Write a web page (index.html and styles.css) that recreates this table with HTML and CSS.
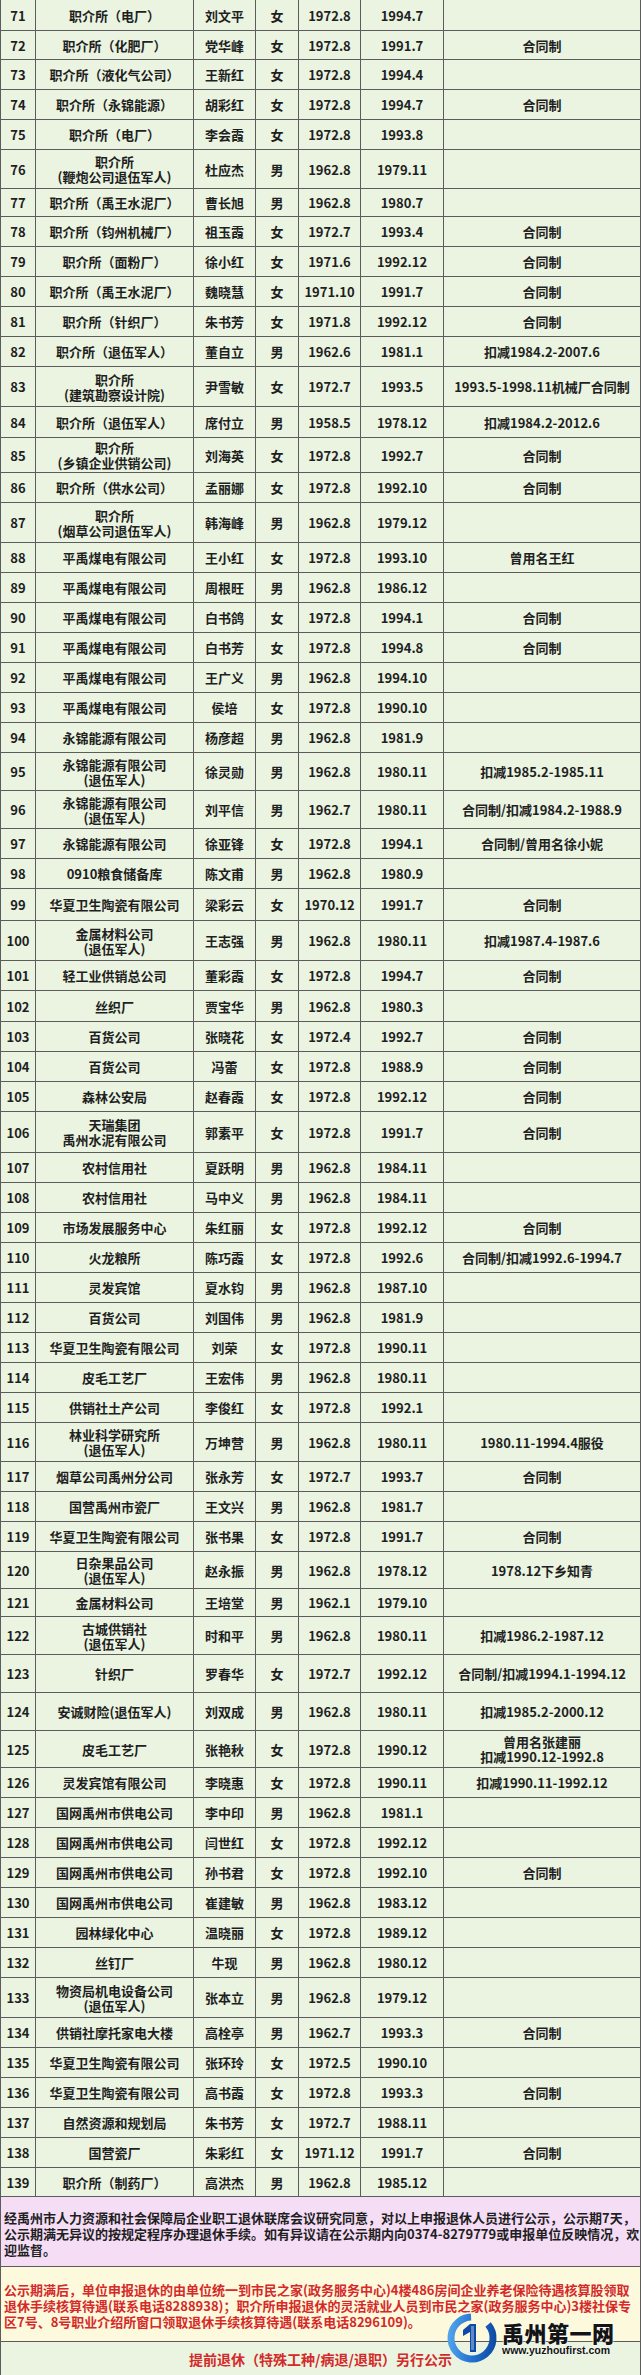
FILE: index.html
```html
<!DOCTYPE html>
<html lang="zh-CN">
<head>
<meta charset="utf-8">
<title>退休人员公示</title>
<link rel="stylesheet" href="styles.css">
</head>
<body>
<div class="page">
  <div class="table">
    <div class="row h31"><div>71</div><div>职介所（电厂）</div><div>刘文平</div><div>女</div><div>1972.8</div><div>1994.7</div><div></div></div>
    <div class="row h29"><div>72</div><div>职介所（化肥厂）</div><div>党华峰</div><div>女</div><div>1972.8</div><div>1991.7</div><div>合同制</div></div>
    <div class="row"><div>73</div><div>职介所（液化气公司）</div><div>王新红</div><div>女</div><div>1972.8</div><div>1994.4</div><div></div></div>
    <div class="row"><div>74</div><div>职介所（永锦能源）</div><div>胡彩红</div><div>女</div><div>1972.8</div><div>1994.7</div><div>合同制</div></div>
    <div class="row"><div>75</div><div>职介所（电厂）</div><div>李会霞</div><div>女</div><div>1972.8</div><div>1993.8</div><div></div></div>
    <div class="row h39"><div>76</div><div>职介所<br>(鞭炮公司退伍军人)</div><div>杜应杰</div><div>男</div><div>1962.8</div><div>1979.11</div><div></div></div>
    <div class="row h28"><div>77</div><div>职介所（禹王水泥厂）</div><div>曹长旭</div><div>男</div><div>1962.8</div><div>1980.7</div><div></div></div>
    <div class="row"><div>78</div><div>职介所（钧州机械厂）</div><div>祖玉霞</div><div>女</div><div>1972.7</div><div>1993.4</div><div>合同制</div></div>
    <div class="row"><div>79</div><div>职介所（面粉厂）</div><div>徐小红</div><div>女</div><div>1971.6</div><div>1992.12</div><div>合同制</div></div>
    <div class="row"><div>80</div><div>职介所（禹王水泥厂）</div><div>魏晓慧</div><div>女</div><div>1971.10</div><div>1991.7</div><div>合同制</div></div>
    <div class="row"><div>81</div><div>职介所（针织厂）</div><div>朱书芳</div><div>女</div><div>1971.8</div><div>1992.12</div><div>合同制</div></div>
    <div class="row"><div>82</div><div>职介所（退伍军人）</div><div>董自立</div><div>男</div><div>1962.6</div><div>1981.1</div><div>扣减1984.2-2007.6</div></div>
    <div class="row h40"><div>83</div><div>职介所<br>(建筑勘察设计院)</div><div>尹雪敏</div><div>女</div><div>1972.7</div><div>1993.5</div><div>1993.5-1998.11机械厂合同制</div></div>
    <div class="row h31"><div>84</div><div>职介所（退伍军人）</div><div>席付立</div><div>男</div><div>1958.5</div><div>1978.12</div><div>扣减1984.2-2012.6</div></div>
    <div class="row h35"><div>85</div><div>职介所<br>(乡镇企业供销公司)</div><div>刘海英</div><div>女</div><div>1972.8</div><div>1992.7</div><div>合同制</div></div>
    <div class="row"><div>86</div><div>职介所（供水公司）</div><div>孟丽娜</div><div>女</div><div>1972.8</div><div>1992.10</div><div>合同制</div></div>
    <div class="row h40"><div>87</div><div>职介所<br>(烟草公司退伍军人)</div><div>韩海峰</div><div>男</div><div>1962.8</div><div>1979.12</div><div></div></div>
    <div class="row"><div>88</div><div>平禹煤电有限公司</div><div>王小红</div><div>女</div><div>1972.8</div><div>1993.10</div><div>曾用名王红</div></div>
    <div class="row"><div>89</div><div>平禹煤电有限公司</div><div>周根旺</div><div>男</div><div>1962.8</div><div>1986.12</div><div></div></div>
    <div class="row"><div>90</div><div>平禹煤电有限公司</div><div>白书鸽</div><div>女</div><div>1972.8</div><div>1994.1</div><div>合同制</div></div>
    <div class="row"><div>91</div><div>平禹煤电有限公司</div><div>白书芳</div><div>女</div><div>1972.8</div><div>1994.8</div><div>合同制</div></div>
    <div class="row"><div>92</div><div>平禹煤电有限公司</div><div>王广义</div><div>男</div><div>1962.8</div><div>1994.10</div><div></div></div>
    <div class="row"><div>93</div><div>平禹煤电有限公司</div><div>侯培</div><div>女</div><div>1972.8</div><div>1990.10</div><div></div></div>
    <div class="row"><div>94</div><div>永锦能源有限公司</div><div>杨彦超</div><div>男</div><div>1962.8</div><div>1981.9</div><div></div></div>
    <div class="row h38"><div>95</div><div>永锦能源有限公司<br>(退伍军人)</div><div>徐灵勋</div><div>男</div><div>1962.8</div><div>1980.11</div><div>扣减1985.2-1985.11</div></div>
    <div class="row h38"><div>96</div><div>永锦能源有限公司<br>(退伍军人)</div><div>刘平信</div><div>男</div><div>1962.7</div><div>1980.11</div><div>合同制/扣减1984.2-1988.9</div></div>
    <div class="row"><div>97</div><div>永锦能源有限公司</div><div>徐亚锋</div><div>女</div><div>1972.8</div><div>1994.1</div><div>合同制/曾用名徐小妮</div></div>
    <div class="row"><div>98</div><div>0910粮食储备库</div><div>陈文甫</div><div>男</div><div>1962.8</div><div>1980.9</div><div></div></div>
    <div class="row h32"><div>99</div><div>华夏卫生陶瓷有限公司</div><div>梁彩云</div><div>女</div><div>1970.12</div><div>1991.7</div><div>合同制</div></div>
    <div class="row h40"><div>100</div><div>金属材料公司<br>(退伍军人)</div><div>王志强</div><div>男</div><div>1962.8</div><div>1980.11</div><div>扣减1987.4-1987.6</div></div>
    <div class="row"><div>101</div><div>轻工业供销总公司</div><div>董彩霞</div><div>女</div><div>1972.8</div><div>1994.7</div><div>合同制</div></div>
    <div class="row h31"><div>102</div><div>丝织厂</div><div>贾宝华</div><div>男</div><div>1962.8</div><div>1980.3</div><div></div></div>
    <div class="row"><div>103</div><div>百货公司</div><div>张晓花</div><div>女</div><div>1972.4</div><div>1992.7</div><div>合同制</div></div>
    <div class="row"><div>104</div><div>百货公司</div><div>冯蕾</div><div>女</div><div>1972.8</div><div>1988.9</div><div>合同制</div></div>
    <div class="row"><div>105</div><div>森林公安局</div><div>赵春霞</div><div>女</div><div>1972.8</div><div>1992.12</div><div>合同制</div></div>
    <div class="row h41"><div>106</div><div>天瑞集团<br>禹州水泥有限公司</div><div>郭素平</div><div>女</div><div>1972.8</div><div>1991.7</div><div>合同制</div></div>
    <div class="row"><div>107</div><div>农村信用社</div><div>夏跃明</div><div>男</div><div>1962.8</div><div>1984.11</div><div></div></div>
    <div class="row"><div>108</div><div>农村信用社</div><div>马中义</div><div>男</div><div>1962.8</div><div>1984.11</div><div></div></div>
    <div class="row"><div>109</div><div>市场发展服务中心</div><div>朱红丽</div><div>女</div><div>1972.8</div><div>1992.12</div><div>合同制</div></div>
    <div class="row"><div>110</div><div>火龙粮所</div><div>陈巧霞</div><div>女</div><div>1972.8</div><div>1992.6</div><div>合同制/扣减1992.6-1994.7</div></div>
    <div class="row"><div>111</div><div>灵发宾馆</div><div>夏水钧</div><div>男</div><div>1962.8</div><div>1987.10</div><div></div></div>
    <div class="row"><div>112</div><div>百货公司</div><div>刘国伟</div><div>男</div><div>1962.8</div><div>1981.9</div><div></div></div>
    <div class="row"><div>113</div><div>华夏卫生陶瓷有限公司</div><div>刘荣</div><div>女</div><div>1972.8</div><div>1990.11</div><div></div></div>
    <div class="row"><div>114</div><div>皮毛工艺厂</div><div>王宏伟</div><div>男</div><div>1962.8</div><div>1980.11</div><div></div></div>
    <div class="row"><div>115</div><div>供销社土产公司</div><div>李俊红</div><div>女</div><div>1972.8</div><div>1992.1</div><div></div></div>
    <div class="row h39"><div>116</div><div>林业科学研究所<br>(退伍军人)</div><div>万坤营</div><div>男</div><div>1962.8</div><div>1980.11</div><div>1980.11-1994.4服役</div></div>
    <div class="row"><div>117</div><div>烟草公司禹州分公司</div><div>张永芳</div><div>女</div><div>1972.7</div><div>1993.7</div><div>合同制</div></div>
    <div class="row"><div>118</div><div>国营禹州市瓷厂</div><div>王文兴</div><div>男</div><div>1962.8</div><div>1981.7</div><div></div></div>
    <div class="row"><div>119</div><div>华夏卫生陶瓷有限公司</div><div>张书果</div><div>女</div><div>1972.8</div><div>1991.7</div><div>合同制</div></div>
    <div class="row h37"><div>120</div><div>日杂果品公司<br>(退伍军人)</div><div>赵永振</div><div>男</div><div>1962.8</div><div>1978.12</div><div>1978.12下乡知青</div></div>
    <div class="row h28"><div>121</div><div>金属材料公司</div><div>王培堂</div><div>男</div><div>1962.1</div><div>1979.10</div><div></div></div>
    <div class="row h38"><div>122</div><div>古城供销社<br>(退伍军人)</div><div>时和平</div><div>男</div><div>1962.8</div><div>1980.11</div><div>扣减1986.2-1987.12</div></div>
    <div class="row h38"><div>123</div><div>针织厂</div><div>罗春华</div><div>女</div><div>1972.7</div><div>1992.12</div><div>合同制/扣减1994.1-1994.12</div></div>
    <div class="row h38"><div>124</div><div>安诚财险(退伍军人)</div><div>刘双成</div><div>男</div><div>1962.8</div><div>1980.11</div><div>扣减1985.2-2000.12</div></div>
    <div class="row h37"><div>125</div><div>皮毛工艺厂</div><div>张艳秋</div><div>女</div><div>1972.8</div><div>1990.12</div><div>曾用名张建丽<br>扣减1990.12-1992.8</div></div>
    <div class="row"><div>126</div><div>灵发宾馆有限公司</div><div>李晓惠</div><div>女</div><div>1972.8</div><div>1990.11</div><div>扣减1990.11-1992.12</div></div>
    <div class="row"><div>127</div><div>国网禹州市供电公司</div><div>李中印</div><div>男</div><div>1962.8</div><div>1981.1</div><div></div></div>
    <div class="row"><div>128</div><div>国网禹州市供电公司</div><div>闫世红</div><div>女</div><div>1972.8</div><div>1992.12</div><div></div></div>
    <div class="row"><div>129</div><div>国网禹州市供电公司</div><div>孙书君</div><div>女</div><div>1972.8</div><div>1992.10</div><div>合同制</div></div>
    <div class="row"><div>130</div><div>国网禹州市供电公司</div><div>崔建敏</div><div>男</div><div>1962.8</div><div>1983.12</div><div></div></div>
    <div class="row"><div>131</div><div>园林绿化中心</div><div>温晓丽</div><div>女</div><div>1972.8</div><div>1989.12</div><div></div></div>
    <div class="row"><div>132</div><div>丝钉厂</div><div>牛现</div><div>男</div><div>1962.8</div><div>1980.12</div><div></div></div>
    <div class="row h40"><div>133</div><div>物资局机电设备公司<br>(退伍军人)</div><div>张本立</div><div>男</div><div>1962.8</div><div>1979.12</div><div></div></div>
    <div class="row"><div>134</div><div>供销社摩托家电大楼</div><div>高栓亭</div><div>男</div><div>1962.7</div><div>1993.3</div><div>合同制</div></div>
    <div class="row"><div>135</div><div>华夏卫生陶瓷有限公司</div><div>张环玲</div><div>女</div><div>1972.5</div><div>1990.10</div><div></div></div>
    <div class="row"><div>136</div><div>华夏卫生陶瓷有限公司</div><div>高书霞</div><div>女</div><div>1972.8</div><div>1993.3</div><div>合同制</div></div>
    <div class="row"><div>137</div><div>自然资源和规划局</div><div>朱书芳</div><div>女</div><div>1972.7</div><div>1988.11</div><div></div></div>
    <div class="row"><div>138</div><div>国营瓷厂</div><div>朱彩红</div><div>女</div><div>1971.12</div><div>1991.7</div><div>合同制</div></div>
    <div class="row h29"><div>139</div><div>职介所（制药厂）</div><div>高洪杰</div><div>男</div><div>1962.8</div><div>1985.12</div><div></div></div>
  </div>

  <div class="note note-purple">经禹州市人力资源和社会保障局企业职工退休联席会议研究同意，对以上申报退休人员进行公示，公示期7天，<br>公示期满无异议的按规定程序办理退休手续。如有异议请在公示期内向0374-8279779或申报单位反映情况，欢<br>迎监督。</div>
  <div class="note note-yellow">公示期满后，单位申报退休的由单位统一到市民之家(政务服务中心)4楼486房间企业养老保险待遇核算股领取<br>退休手续核算待遇(联系电话8288938)；职介所申报退休的灵活就业人员到市民之家(政务服务中心)3楼社保专<br>区7号、8号职业介绍所窗口领取退休手续核算待遇(联系电话8296109)。</div>
  <div class="note note-green">提前退休（特殊工种/病退/退职）另行公示</div>

  <div class="watermark">
    <svg class="wm-logo" width="52" height="52" viewBox="0 0 52 52" aria-hidden="true">
      <defs>
        <linearGradient id="ring" x1="0" y1="0" x2="1" y2="1">
          <stop offset="0" stop-color="#5fb0f0"/>
          <stop offset="0.55" stop-color="#1f6fd0"/>
          <stop offset="1" stop-color="#0b3f94"/>
        </linearGradient>
      </defs>
      <circle cx="26" cy="26" r="21" fill="none" stroke="url(#ring)" stroke-width="7" stroke-dasharray="112 20" transform="rotate(-40 26 26)"/>
      <polygon points="24,12 30,12 30,40 24,40 24,20 17,24 17,18" fill="#0d4aa8"/>
      <polygon points="25,14 28,14 28,38 25,38" fill="#ffffff" opacity="0.35"/>
    </svg>
    <div class="wm-text">
      <div class="wm-title">禹州第一网</div>
      <div class="wm-url">www.yuzhoufirst.com</div>
    </div>
  </div>
</div>
</body>
</html>
```

FILE: styles.css
```css
html, body {
  margin: 0;
  padding: 0;
}

body {
  background: #eaf4e1;
  font-family: "Noto Sans CJK SC", "Noto Sans", sans-serif;
  font-weight: 700;
  font-size: 13px;
  color: #1f1f1f;
}

.page {
  position: relative;
  width: 641px;
}

.table {
  background: #eaf4e1;
}

.row {
  display: grid;
  grid-template-columns: 35px 158px 62px 43px 62px 83px 197px;
  height: 30px;
  box-sizing: border-box;
  border-left: 1px solid #5c5c5c;
  border-bottom: 1px solid #5c5c5c;
}

.row > div {
  box-sizing: border-box;
  border-right: 1px solid #5c5c5c;
  display: flex;
  align-items: center;
  justify-content: center;
  text-align: center;
  line-height: 15px;
  white-space: nowrap;
}

.h28 { height: 28px; }
.h29 { height: 29px; }
.h31 { height: 31px; }
.h32 { height: 32px; }
.h35 { height: 35px; }
.h37 { height: 37px; }
.h38 { height: 38px; }
.h39 { height: 39px; }
.h40 { height: 40px; }
.h41 { height: 41px; }

.note {
  box-sizing: border-box;
  border-left: 1px solid #5c5c5c;
  border-right: 1px solid #5c5c5c;
  border-bottom: 1px solid #5c5c5c;
  white-space: nowrap;
  font-size: 13px;
  line-height: 16px;
}

.note-purple {
  height: 70px;
  background: #f5ddf6;
  color: #1f1f1f;
  padding: 13px 0 0 3px;
}

.note-yellow {
  height: 75px;
  background: #fdf9dc;
  color: #d42a2a;
  padding: 15px 0 0 3px;
}

.note-green {
  height: 34px;
  background: #eaf4e1;
  color: #d42a2a;
  text-align: center;
  font-size: 14px;
  line-height: 34px;
}

.watermark {
  position: absolute;
  left: 446px;
  top: 2312px;
  display: flex;
  align-items: center;
  gap: 4px;
}

.wm-logo {
  display: block;
}

.wm-text {
  display: flex;
  flex-direction: column;
  align-items: flex-start;
}

.wm-title {
  font-family: "Noto Sans CJK SC", sans-serif;
  font-weight: 900;
  font-size: 22px;
  line-height: 24px;
  color: #141414;
  letter-spacing: 0.5px;
  text-shadow: 0 0 2px #ffffff, 0 0 2px #ffffff;
}

.wm-url {
  font-family: "Liberation Sans", Arial, sans-serif;
  font-weight: 700;
  font-size: 10.5px;
  line-height: 12px;
  color: #141414;
  text-shadow: 0 0 2px #ffffff;
}
```
